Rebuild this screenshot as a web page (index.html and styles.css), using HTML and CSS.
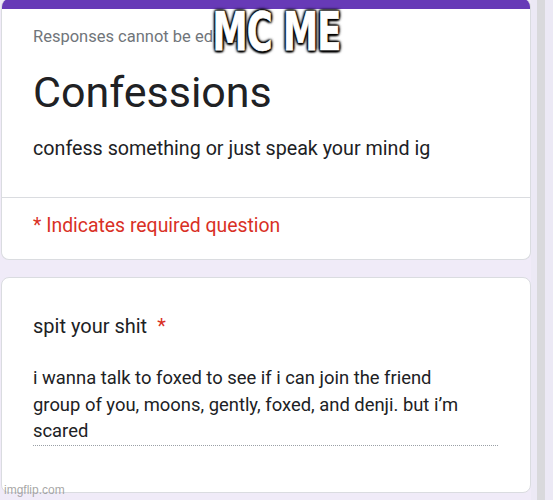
FILE: index.html
```html
<!DOCTYPE html>
<html>
<head>
<meta charset="utf-8">
<link rel="stylesheet" href="styles.css">
</head>
<body>
<div class="page">
  <main class="main">
    <section class="card card-head">
      <div class="bar"></div>
      <div class="head-body">
        <div class="note">Responses cannot be edited</div>
        <h1 class="title">Confessions</h1>
        <div class="desc">confess something or just speak your mind ig</div>
      </div>
      <div class="required">* Indicates required question</div>
    </section>
    <section class="card card-q">
      <div class="question">spit your shit <span class="star">*</span></div>
      <div class="answer"><div class="answer-text">i wanna talk to foxed to see if i can join the friend group of you, moons, gently, foxed, and denji. but i’m scared</div></div>
    </section>
  </main>
  <div class="gutter"><div class="track"></div></div>
</div>
<div class="meme">MC ME</div>
<div class="wm">imgflip.com</div>
</body>
</html>
```
FILE: styles.css
```css
html, body {
  margin: 0;
  padding: 0;
}
body {
  background: #f0ebf8;
  width: 553px;
  height: 500px;
  overflow: hidden;
  position: relative;
  font-family: Roboto, "Liberation Sans", sans-serif;
  color: #202124;
}
.page {
  display: flex;
  height: 500px;
}
.main {
  width: 530px;
  margin-left: 1px;
  display: flex;
  flex-direction: column;
  gap: 17px;
}
.card {
  background: #fff;
  border: 1px solid #dadce0;
  border-radius: 8px;
  overflow: hidden;
}
.card-head {
  margin-top: -1px;
  border-top: none;
}
.bar {
  height: 10px;
  background: #673ab7;
}
.head-body {
  padding: 18px 30px 0 31px;
  height: 189px;
  border-bottom: 1px solid #dadce0;
  box-sizing: border-box;
}
.note {
  font-size: 16.5px;
  line-height: 20px;
  color: #70757a;
}
.title {
  margin: 20px 0 0;
  font-size: 43px;
  line-height: 50px;
  font-weight: 400;
}
.desc {
  margin-top: 19px;
  font-size: 19.7px;
  line-height: 26px;
}
.required {
  padding: 16px 31px 21px;
  font-size: 19.4px;
  line-height: 24px;
  color: #d93025;
}
.card-q {
  padding: 36px 31px 0;
  box-sizing: border-box;
  height: 216px;
}
.question {
  font-size: 20px;
  line-height: 24px;
}
.star {
  color: #d93025;
  margin-left: 5px;
}
.answer {
  margin-top: 27px;
  width: 465px;
  border-bottom: 1px dotted #9aa0a6;
}
.answer-text {
  width: 445px;
  font-size: 18.4px;
  line-height: 26.5px;
}
.gutter {
  width: 22px;
  padding-left: 6px;
  box-sizing: border-box;
  background: #ece9f5;
}
.track {
  width: 8px;
  height: 100%;
  background: #d9d9dc;
}
.meme {
  position: absolute;
  top: -5px;
  left: 0;
  width: 553px;
  text-align: center;
  font-family: "Liberation Sans Narrow", "DejaVu Sans Condensed", sans-serif;
  font-weight: 700;
  font-size: 44px;
  line-height: 60px;
  color: #fff;
  letter-spacing: -1px;
  transform: scale(0.89, 1.23);
  transform-origin: 50% 0;
  -webkit-text-stroke: 0.6px #fff;
  text-shadow: 0 0 3px #000, 0 0 3px #000, 0 0 4px #000, 1px 1px 2px #000, -1px -1px 2px #000, 1px -1px 2px #000, -1px 1px 2px #000;
}
.wm {
  position: absolute;
  left: 4px;
  bottom: 3px;
  font-size: 12px;
  color: rgba(150, 150, 150, 0.85);
  font-family: "Liberation Sans", sans-serif;
}
```
